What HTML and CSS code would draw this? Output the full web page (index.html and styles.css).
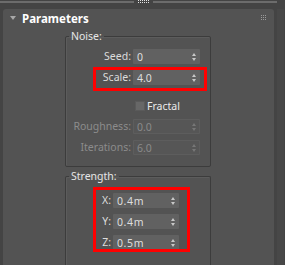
FILE: index.html
```html
<!DOCTYPE html>
<html lang="en">
<head>
    <meta charset="UTF-8">
    <meta name="viewport" content="width=device-width, initial-scale=1.0">
    <title>Parameters</title>
    <link rel="stylesheet" href="styles.css">
</head>
<body>
    <div class="topbar">
        <div class="topline"></div>
        <div class="grip"></div>
        <div class="topline"></div>
    </div>

    <div class="main">
        <div class="panel">
            <div class="panel-head">
                <span class="caret"></span>
                <span class="title">Parameters</span>
                <span class="dots"></span>
            </div>

            <fieldset class="group">
                <legend>Noise:</legend>
                <div class="rows noise">
                    <label class="lbl">Seed:</label>
                    <div class="spin"><span>0</span><i class="arrows"></i></div>

                    <div class="row-mark">
                        <label class="lbl">Scale:</label>
                        <div class="spin"><span>4.0</span><i class="arrows"></i></div>
                        <div class="mark mark-scale"></div>
                    </div>

                    <div class="check-row">
                        <span class="box"></span>
                        <span>Fractal</span>
                    </div>

                    <label class="lbl off">Roughness:</label>
                    <div class="spin off"><span>0.0</span><i class="arrows"></i></div>

                    <label class="lbl off">Iterations:</label>
                    <div class="spin off"><span>6.0</span><i class="arrows"></i></div>
                </div>
            </fieldset>

            <fieldset class="group strength">
                <legend>Strength:</legend>
                <div class="rows xyz">
                    <label class="lbl">X:</label>
                    <div class="spin"><span>0.4m</span><i class="arrows"></i></div>
                    <label class="lbl">Y:</label>
                    <div class="spin"><span>0.4m</span><i class="arrows"></i></div>
                    <label class="lbl">Z:</label>
                    <div class="spin"><span>0.5m</span><i class="arrows"></i></div>
                    <div class="mark mark-xyz"></div>
                </div>
            </fieldset>
        </div>
        <div class="scroll"></div>
    </div>
</body>
</html>
```

FILE: styles.css
```css
body {
    margin: 0;
    background: #444;
    font-family: 'Noto Sans', 'Open Sans', sans-serif;
    font-size: 10.5px;
    color: #dcdcdc;
    height: 265px;
    display: flex;
    flex-direction: column;
    overflow: hidden;
}

/* top splitter */
.topbar {
    display: flex;
    align-items: flex-start;
    height: 9px;
}
.topline {
    flex: 1;
    height: 2px;
    margin-top: 1px;
    background: #6c6c6c;
}
.topline:last-child {
    flex: 0 0 124px;
    margin-right: 8px;
}
.grip {
    width: 12px;
    height: 4px;
    margin: 0 4px 0 3px;
    background: conic-gradient(from 90deg at 1px 1px, transparent 75%, #e2e2e2 0) 0 0 / 2px 2px;
}

.main {
    flex: 1;
    display: flex;
    min-height: 0;
}

.panel {
    width: 271px;
    margin-left: 3px;
    background: #535353;
    border-radius: 3px 3px 0 0;
    overflow: hidden;
}
.scroll {
    width: 7px;
    margin-left: 3px;
    background: #484848;
}

.panel-head {
    height: 18px;
    display: flex;
    align-items: center;
    position: relative;
}
.caret {
    width: 0;
    height: 0;
    margin: 0 6px 0 7px;
    border-left: 3px solid transparent;
    border-right: 3px solid transparent;
    border-top: 4px solid #a8a8a8;
}
.title {
    font-weight: 700;
    font-size: 11.5px;
    color: #fff;
}
.dots {
    position: absolute;
    right: 8px;
    top: 6px;
    width: 6px;
    height: 6px;
    background: conic-gradient(from 90deg at 1px 1px, transparent 75%, #9a9a9a 0) 0 0 / 2px 2px;
}

/* group boxes */
.group {
    margin: 2px 0 0 62px;
    width: 146px;
    box-sizing: border-box;
    padding: 6px 0 11px 0;
    border: 1px solid #3c3c3c;
    border-radius: 2px;
    box-shadow: inset 1px 1px 0 #5c5c5c;
}
.group legend {
    margin-left: 3px;
    padding: 0 2px;
    line-height: 14px;
    color: #e6e6e6;
}
.strength {
    margin-top: 2px;
    padding-top: 10px;
    padding-bottom: 0;
    height: 96px;
    border-bottom: 0;
    border-radius: 2px 2px 0 0;
}

.rows {
    display: grid;
    row-gap: 6px;
    column-gap: 2px;
    align-items: center;
    position: relative;
}
.noise {
    grid-template-columns: 65px 67px;
}
.xyz {
    grid-template-columns: 45px 66px;
}

.lbl {
    text-align: right;
    line-height: 15px;
    white-space: nowrap;
}
.lbl.off {
    color: #8c8c8c;
}

.spin {
    height: 15px;
    background: #616161;
    border-radius: 1px;
    display: flex;
    align-items: center;
    justify-content: space-between;
    padding: 0 4px;
    box-sizing: border-box;
    color: #dedede;
}
.spin.off {
    background: #565656;
    box-shadow: inset 0 0 0 1px #5d5d5d;
    color: #8a8a8a;
}
.xyz .spin span {
    letter-spacing: 0.6px;
}

.arrows {
    display: flex;
    flex-direction: column;
    gap: 2px;
}
.arrows::before,
.arrows::after {
    content: '';
    width: 0;
    height: 0;
    border-left: 2.5px solid transparent;
    border-right: 2.5px solid transparent;
}
.arrows::before {
    border-bottom: 3px solid #c8c8c8;
}
.arrows::after {
    border-top: 3px solid #c8c8c8;
}
.off .arrows::before {
    border-bottom-color: #777;
}
.off .arrows::after {
    border-top-color: #777;
}

.row-mark {
    grid-column: 1 / -1;
    display: grid;
    grid-template-columns: 65px 67px;
    column-gap: 2px;
    align-items: center;
    position: relative;
}

.check-row {
    grid-column: 2;
    display: flex;
    align-items: center;
    gap: 2px;
    margin-top: 7px;
    padding-left: 2px;
    height: 15px;
    color: #ececec;
}
.box {
    width: 10px;
    height: 10px;
    box-sizing: border-box;
    background: #676767;
    border: 1px solid #5a5a5a;
}

/* red annotation frames */
.mark {
    position: absolute;
    border: 3px solid #f00;
    box-sizing: border-box;
    pointer-events: none;
}
.mark-scale {
    left: 27px;
    top: -3px;
    width: 114px;
    height: 24px;
}
.mark-xyz {
    left: 27px;
    top: -6px;
    width: 97px;
    height: 65px;
}
```
